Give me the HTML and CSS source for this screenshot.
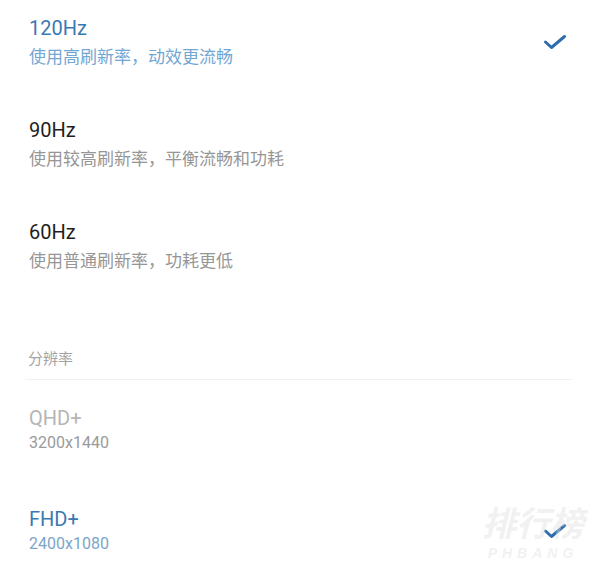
FILE: index.html
```html
<!DOCTYPE html>
<html lang="zh-CN">
<head>
  <meta charset="UTF-8">
  <meta name="viewport" content="width=device-width, initial-scale=1.0">
  <title>屏幕刷新率</title>
  <link rel="stylesheet" href="styles.css">
</head>
<body>

  <div class="page">
    <div class="option selected">
      <div class="option-text">
        <div class="title">120Hz</div>
        <div class="desc">使用高刷新率，动效更流畅</div>
      </div>
      <svg class="check" width="24" height="16" viewBox="0 0 24 16">
        <path d="M2.5 8 L8.5 13.5 L21.5 2.5" />
      </svg>
    </div>

    <div class="option">
      <div class="option-text">
        <div class="title">90Hz</div>
        <div class="desc">使用较高刷新率，平衡流畅和功耗</div>
      </div>
    </div>

    <div class="option">
      <div class="option-text">
        <div class="title">60Hz</div>
        <div class="desc">使用普通刷新率，功耗更低</div>
      </div>
    </div>

    <div class="section-header">分辨率</div>

    <div class="option res disabled">
      <div class="option-text">
        <div class="title">QHD+</div>
        <div class="desc">3200x1440</div>
      </div>
    </div>

    <div class="option res selected">
      <div class="option-text">
        <div class="title">FHD+</div>
        <div class="desc">2400x1080</div>
      </div>
      <svg class="check" width="24" height="16" viewBox="0 0 24 16">
        <path d="M2.5 8 L8.5 13.5 L21.5 2.5" />
      </svg>
    </div>

    <div class="watermark">
      <span class="wm-big">排行榜</span>
      <span class="wm-small">PHBANG</span>
    </div>
  </div>

</body>
</html>
```

FILE: styles.css
```css
:root {
  --blue: #3b78b2;
  --blue-light: #72a6d3;
  --check: #2d6dab;
  --text: #1e1e1e;
  --text-muted: #969696;
}
body {
  margin: 0;
  background: #ffffff;
  font-family: Roboto, "Noto Sans CJK SC", sans-serif;
  color: var(--text);
}
.page {
  position: relative;
  width: 600px;
  height: 583px;
  overflow: hidden;
}
.option {
  display: flex;
  align-items: center;
  justify-content: space-between;
  padding: 16px 33px 34px 29px;
}
.title {
  font-size: 20px;
  line-height: 24px;
}
.desc {
  margin-top: 4px;
  font-family: "Noto Sans CJK SC", Roboto, sans-serif;
  font-size: 17px;
  line-height: 24px;
  color: var(--text-muted);
}
.selected .title {
  color: var(--blue);
}
.selected .desc {
  color: var(--blue-light);
}
.check path {
  fill: none;
  stroke: var(--check);
  stroke-width: 3;
  stroke-linecap: round;
  stroke-linejoin: round;
}
.section-header {
  margin: 42px 28px 0 25px;
  padding: 0 0 11px 3px;
  border-bottom: 1px solid #f1f1f1;
  font-family: "Noto Sans CJK SC", sans-serif;
  font-size: 15px;
  line-height: 20px;
  color: #a3a3a3;
}
.res {
  padding-top: 26px;
  padding-bottom: 27px;
}
.res .desc {
  margin-top: 2px;
  font-family: Roboto, sans-serif;
  font-size: 16px;
  line-height: 22px;
}
.disabled .title {
  color: #b5b5b5;
}
.disabled .desc {
  color: #9a9a9a;
}
.selected.res .desc {
  color: #7ba4c8;
}
.watermark {
  position: absolute;
  left: 482px;
  top: 503px;
  display: flex;
  flex-direction: column;
  align-items: center;
  gap: 4px;
  pointer-events: none;
  font-style: italic;
  font-weight: bold;
  color: rgba(225, 225, 225, 0.45);
}
.wm-big {
  font-family: "Noto Sans CJK SC", sans-serif;
  font-size: 34px;
  line-height: 38px;
  letter-spacing: 0;
}
.wm-small {
  font-family: "Liberation Sans", sans-serif;
  font-size: 14px;
  line-height: 16px;
  letter-spacing: 5px;
}
```
